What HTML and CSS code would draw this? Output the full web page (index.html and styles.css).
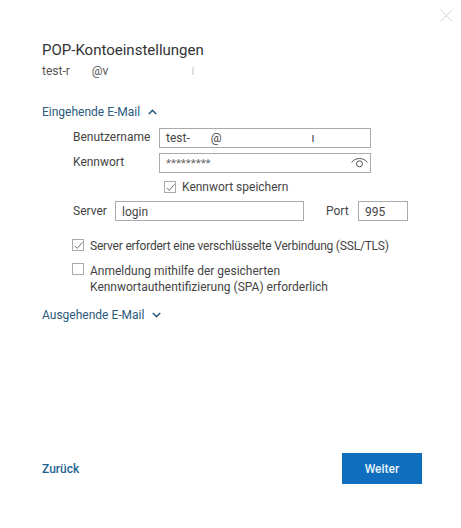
FILE: index.html
```html
<!DOCTYPE html>
<html lang="de">
<head>
    <meta charset="UTF-8">
    <meta name="viewport" content="width=device-width, initial-scale=1.0">
    <title>POP-Kontoeinstellungen</title>
    <link rel="stylesheet" href="styles.css">
</head>

<body>
    <div class="dialog">
        <div class="close-row">
            <svg class="close-icon" width="13" height="13" viewBox="0 0 13 13"><path d="M0.5 0.5L12.5 12.5M12.5 0.5L0.5 12.5"/></svg>
        </div>

        <h1 class="title">POP-Kontoeinstellungen</h1>
        <p class="account">test-r<span class="gap-a"></span>@v<span class="gap-b"></span><span class="faint">i</span></p>

        <div class="section-head section-in">
            <span>Eingehende E-Mail</span>
            <svg class="chevron" width="9" height="6" viewBox="0 0 9 6"><path d="M0.8 5L4.5 1.4L8.2 5"/></svg>
        </div>

        <div class="field-row">
            <label class="field-label">Benutzername</label>
            <div class="input wide">test-<span class="gap-c"></span>@<span class="gap-d"></span>ı</div>
        </div>
        <div class="field-row row-pass">
            <label class="field-label">Kennwort</label>
            <div class="input wide pass">
                <span class="stars">*********</span>
                <svg class="eye" width="17" height="11" viewBox="0 0 17 11"><path d="M0.7 5.5C4 0.2 13 0.2 16.3 5.5"/><circle cx="8.5" cy="6.8" r="3"/></svg>
            </div>
        </div>
        <div class="check-row save">
            <span class="box">
                <svg width="11" height="11" viewBox="0 0 11 11"><path d="M1.8 5.8L4.3 8.4L9.4 2.2"/></svg>
            </span>
            <span>Kennwort speichern</span>
        </div>

        <div class="server-row">
            <label class="server-label">Server</label>
            <div class="input server">login</div>
            <label class="port-label">Port</label>
            <div class="input port">995</div>
        </div>

        <div class="check-row ssl">
            <span class="box">
                <svg width="11" height="11" viewBox="0 0 11 11"><path d="M1.8 5.8L4.3 8.4L9.4 2.2"/></svg>
            </span>
            <span>Server erfordert eine verschlüsselte Verbindung (SSL/TLS)</span>
        </div>
        <div class="check-row spa">
            <span class="box"></span>
            <span>Anmeldung mithilfe der gesicherten<br>Kennwortauthentifizierung (SPA) erforderlich</span>
        </div>

        <div class="section-head section-out">
            <span>Ausgehende E-Mail</span>
            <svg class="chevron" width="9" height="6" viewBox="0 0 9 6"><path d="M0.8 1L4.5 4.6L8.2 1"/></svg>
        </div>

        <div class="footer">
            <a class="back">Zurück</a>
            <button class="next">Weiter</button>
        </div>
    </div>
</body>
</html>
```

FILE: styles.css
```css
* {
    box-sizing: border-box;
}

body {
    margin: 0;
    background: #fff;
    font-family: Roboto, "Open Sans", Arial, sans-serif;
    font-size: 12px;
    color: #444;
    overflow: hidden;
}

.dialog {
    height: 528px;
    padding: 9px 39px 44px 42px;
    display: flex;
    flex-direction: column;
}

.close-row {
    display: flex;
    justify-content: flex-end;
    margin-right: -31px;
    height: 13px;
}
.close-icon path {
    stroke: #d4d4d4;
    fill: none;
}

.title {
    margin: 18px 0 0;
    font-size: 15px;
    line-height: 20px;
    font-weight: 400;
    color: #333;
}

.account {
    margin: 2px 0 0;
    line-height: 18px;
    font-size: 12px;
    color: #555;
    display: flex;
}
.gap-a { width: 22px; }
.gap-b { width: 83px; }
.faint { color: #ccc; }
.gap-c { width: 21px; }
.gap-d { width: 90px; }

.section-head {
    display: flex;
    align-items: center;
    gap: 8px;
    line-height: 18px;
    color: #2a5a7c;
}
.section-in { margin-top: 23px; }
.section-out { margin-top: 11px; }
.chevron path {
    stroke: #2a5a7c;
    stroke-width: 1.5;
    fill: none;
}

.field-row {
    display: flex;
    align-items: flex-start;
    margin-top: 7px;
}
.row-pass { margin-top: 5px; }
.field-label {
    width: 117px;
    padding-left: 31px;
    line-height: 19px;
}

.input {
    height: 20px;
    border: 1px solid #aaa;
    background: #fff;
    line-height: 18px;
    padding-left: 6px;
    font-size: 12px;
    color: #444;
    display: flex;
}
.wide { width: 212px; }
.pass {
    justify-content: space-between;
    align-items: center;
    padding-right: 2px;
}
.stars {
    font-size: 11.5px;
    color: #666;
}
.eye {
    margin-top: -1px;
}
.eye path, .eye circle {
    stroke: #555;
    fill: none;
}

.check-row {
    display: flex;
    align-items: flex-start;
    gap: 6px;
    line-height: 16px;
}
.box {
    width: 12px;
    height: 12px;
    margin-top: 2px;
    border: 1px solid #aaa;
    flex: none;
    display: flex;
    align-items: center;
    justify-content: center;
}
.box svg {
    flex: none;
}
.box path {
    stroke: #777;
    fill: none;
}
.save {
    margin: 6px 0 0 122px;
}
.ssl {
    margin: 17px 0 0 30px;
    letter-spacing: -0.2px;
}
.ssl .box {
    margin-top: 1px;
}
.spa {
    margin: 9px 0 0 30px;
}
.spa .box {
    margin-top: 0;
}

.server-row {
    display: flex;
    align-items: center;
    height: 20px;
    margin: 6px 0 0 31px;
}
.server-label {
    width: 42px;
}
.server {
    width: 189px;
    padding-top: 1px;
}
.port-label {
    margin-left: 22px;
    width: 32px;
}
.port {
    width: 50px;
    padding-top: 1px;
}

.footer {
    margin-top: auto;
    display: flex;
    justify-content: space-between;
    align-items: center;
}
.back {
    color: #1f6391;
    font-size: 12px;
    font-weight: 500;
}
.next {
    width: 80px;
    height: 31px;
    border: none;
    background: #106ebe;
    color: #e6f2fb;
    font-family: inherit;
    font-size: 12px;
    font-weight: 500;
}
```
